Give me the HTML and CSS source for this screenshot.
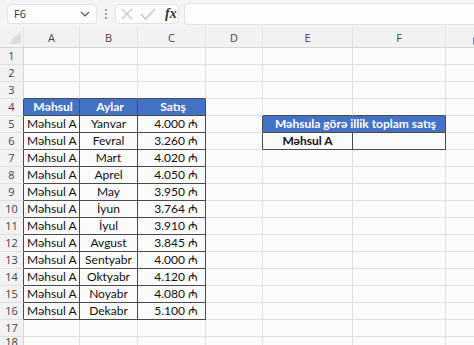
FILE: index.html
```html
<!DOCTYPE html>
<html lang="az">
<head>
    <meta charset="UTF-8">
    <title>Məhsul satışı</title>
    <link rel="stylesheet" href="styles.css">
</head>
<body>
    <div class="formula-bar">
        <div class="name-box">
            <span>F6</span>
            <svg class="chevron" width="10" height="6" viewBox="0 0 10 6"><path d="M1 1l4 4 4-4" fill="none" stroke="#555" stroke-width="1.2"/></svg>
        </div>
        <div class="grip"><i></i><i></i><i></i></div>
        <div class="fx-box">
            <svg width="14" height="14" viewBox="0 0 14 14"><path d="M2 2l10 10M12 2L2 12" stroke="#c4c4c4" stroke-width="1.2"/></svg>
            <svg width="16" height="14" viewBox="0 0 16 14"><path d="M1 7l4.5 5L15 2" fill="none" stroke="#c4c4c4" stroke-width="1.2"/></svg>
            <span class="fx">fx</span>
        </div>
        <div class="formula-input"></div>
    </div>

    <table class="sheet">
        <colgroup>
            <col class="c-rh"><col class="c-a"><col class="c-b"><col class="c-c"><col class="c-d"><col class="c-e"><col class="c-f"><col class="c-g">
        </colgroup>
        <thead>
            <tr class="col-heads">
                <th class="corner"><span class="tri"></span></th>
                <th>A</th><th>B</th><th>C</th><th>D</th><th>E</th><th>F</th><th class="g"><span class="scroll-dot"></span></th>
            </tr>
        </thead>
        <tbody>
            <tr><th>1</th><td></td><td></td><td></td><td></td><td></td><td></td><td></td></tr>
            <tr><th>2</th><td></td><td></td><td></td><td></td><td></td><td></td><td></td></tr>
            <tr><th>3</th><td class="over"></td><td class="over"></td><td class="over"></td><td></td><td></td><td></td><td></td></tr>
            <tr>
                <th class="edge">4</th>
                <td class="head">Məhsul</td><td class="head">Aylar</td><td class="head">Satış</td>
                <td></td><td class="over"></td><td class="over"></td><td></td>
            </tr>
            <tr>
                <th class="edge">5</th>
                <td class="box">Məhsul A</td><td class="box mid">Yanvar</td><td class="box num">4.000 ₼</td>
                <td class="edge"></td><td class="head title" colspan="2">Məhsula görə illik toplam satış</td><td></td>
            </tr>
            <tr>
                <th class="edge">6</th>
                <td class="box">Məhsul A</td><td class="box mid">Fevral</td><td class="box num">3.260 ₼</td>
                <td class="edge"></td><td class="box mid strong">Məhsul A</td><td class="box"></td><td></td>
            </tr>
            <tr>
                <th class="edge">7</th>
                <td class="box">Məhsul A</td><td class="box mid">Mart</td><td class="box num">4.020 ₼</td>
                <td></td><td></td><td></td><td></td>
            </tr>
            <tr>
                <th class="edge">8</th>
                <td class="box">Məhsul A</td><td class="box mid">Aprel</td><td class="box num">4.050 ₼</td>
                <td></td><td></td><td></td><td></td>
            </tr>
            <tr>
                <th class="edge">9</th>
                <td class="box">Məhsul A</td><td class="box mid">May</td><td class="box num">3.950 ₼</td>
                <td></td><td></td><td></td><td></td>
            </tr>
            <tr>
                <th class="edge">10</th>
                <td class="box">Məhsul A</td><td class="box mid">İyun</td><td class="box num">3.764 ₼</td>
                <td></td><td></td><td></td><td></td>
            </tr>
            <tr>
                <th class="edge">11</th>
                <td class="box">Məhsul A</td><td class="box mid">İyul</td><td class="box num">3.910 ₼</td>
                <td></td><td></td><td></td><td></td>
            </tr>
            <tr>
                <th class="edge">12</th>
                <td class="box">Məhsul A</td><td class="box mid">Avgust</td><td class="box num">3.845 ₼</td>
                <td></td><td></td><td></td><td></td>
            </tr>
            <tr>
                <th class="edge">13</th>
                <td class="box">Məhsul A</td><td class="box mid">Sentyabr</td><td class="box num">4.000 ₼</td>
                <td></td><td></td><td></td><td></td>
            </tr>
            <tr>
                <th class="edge">14</th>
                <td class="box">Məhsul A</td><td class="box mid">Oktyabr</td><td class="box num">4.120 ₼</td>
                <td></td><td></td><td></td><td></td>
            </tr>
            <tr>
                <th class="edge">15</th>
                <td class="box">Məhsul A</td><td class="box mid">Noyabr</td><td class="box num">4.080 ₼</td>
                <td></td><td></td><td></td><td></td>
            </tr>
            <tr>
                <th class="edge">16</th>
                <td class="box">Məhsul A</td><td class="box mid">Dekabr</td><td class="box num">5.100 ₼</td>
                <td></td><td></td><td></td><td></td>
            </tr>
            <tr><th>17</th><td></td><td></td><td></td><td></td><td></td><td></td><td></td></tr>
            <tr><th class="cut">18</th><td></td><td></td><td></td><td></td><td></td><td></td><td></td></tr>
        </tbody>
    </table>
</body>
</html>
```

FILE: styles.css
```css
body {
    margin: 0;
    width: 474px;
    height: 345px;
    overflow: hidden;
    background-color: #fbfbfb;
    font-family: Lato, "Open Sans", sans-serif;
}

/* formula bar */
.formula-bar {
    display: flex;
    align-items: center;
    height: 27px;
    padding-left: 7px;
    background-color: #f4f4f4;
    box-sizing: border-box;
}
.name-box {
    display: flex;
    align-items: center;
    justify-content: space-between;
    width: 90px;
    height: 20px;
    padding: 0 6px 0 6px;
    box-sizing: border-box;
    background-color: #fdfdfd;
    border: 1px solid #e2e2e2;
    border-radius: 4px;
    font-family: "Open Sans", sans-serif;
    font-size: 11px;
    color: #333;
}
.grip {
    display: flex;
    flex-direction: column;
    gap: 2px;
    margin: 0 8px 0 8px;
}
.grip i {
    display: block;
    width: 2px;
    height: 2px;
    background-color: #9a9a9a;
}
.fx-box {
    display: flex;
    align-items: center;
    gap: 6px;
    width: 64px;
    height: 20px;
    padding-left: 4px;
    box-sizing: border-box;
    background-color: #fdfdfd;
    border: 1px solid #e2e2e2;
    border-radius: 4px;
}
.fx {
    font-family: "Liberation Serif", serif;
    font-style: italic;
    font-weight: bold;
    font-size: 14px;
    color: #333;
    margin-left: 3px;
}
.formula-input {
    flex: 1;
    height: 20px;
    margin-left: 5px;
    background-color: #fdfdfd;
    border: 1px solid #e2e2e2;
    border-right: none;
    border-radius: 4px 0 0 4px;
}

/* grid */
.sheet {
    border-collapse: separate;
    border-spacing: 0;
    table-layout: fixed;
    width: 480px;
}
.c-rh { width: 24px; }
.c-a { width: 56px; }
.c-b { width: 58px; }
.c-c { width: 68px; }
.c-d { width: 57px; }
.c-e { width: 90px; }
.c-f { width: 93px; }
.c-g { width: 34px; }

.sheet th,
.sheet td {
    height: 17px;
    padding: 0;
    box-sizing: border-box;
    border-right: 1px solid #e1e1e1;
    border-bottom: 1px solid #e1e1e1;
    white-space: nowrap;
    overflow: hidden;
    font-size: 12px;
    line-height: 16px;
    color: #111;
}
.sheet th {
    background-color: #f2f2f2;
    font-family: "Open Sans", sans-serif;
    font-weight: normal;
    font-size: 11px;
    color: #444;
    text-align: center;
}
.col-heads th {
    height: 21px;
    border-bottom: 1px solid #d6d6d6;
    padding-top: 2px;
}
.sheet tbody th {
    border-right: 1px solid #d6d6d6;
}
.sheet tbody th.cut {
    line-height: 8px;
    vertical-align: top;
    padding-top: 1px;
}
.corner {
    position: relative;
}
.tri {
    position: absolute;
    right: 2px;
    bottom: 3px;
    width: 0;
    height: 0;
    border-left: 13px solid transparent;
    border-bottom: 13px solid #dcdcdc;
}
.g {
    position: relative;
}
.scroll-dot {
    position: absolute;
    left: 27px;
    top: 10px;
    width: 6px;
    height: 6px;
    border: 1px solid #6a8ab8;
    border-radius: 1px;
}

/* data borders */
.sheet .over { border-bottom-color: #4a4a4a; }
.sheet .edge { border-right-color: #4a4a4a; }
.sheet .box,
.sheet .head {
    border-right-color: #4a4a4a;
    border-bottom-color: #4a4a4a;
    padding-left: 3px;
}
.sheet tbody th.edge {
    border-right: 1px solid #4a4a4a;
}
.sheet .head {
    background-color: #4472c4;
    color: #fff;
    font-weight: bold;
    text-align: center;
}
.sheet .title {
    font-size: 12px;
}
.sheet .mid { text-align: center; padding-left: 0; }
.sheet .num { text-align: right; padding-right: 7px; }
.sheet .strong { font-weight: bold; }
```
